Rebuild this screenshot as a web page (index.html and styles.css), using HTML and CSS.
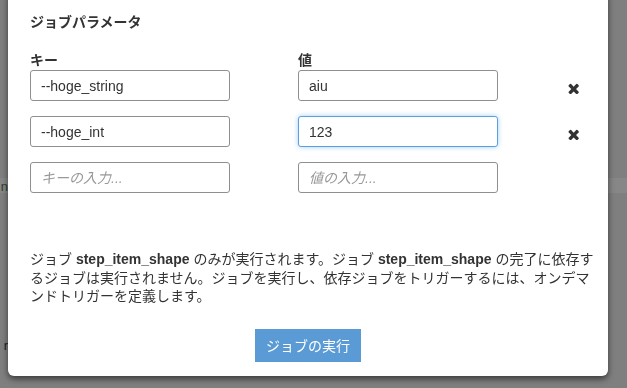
FILE: index.html
```html
<!DOCTYPE html>
<html lang="ja">
<head>
    <meta charset="UTF-8">
    <title>ジョブパラメータ</title>
    <meta name="viewport" content="width=device-width, initial-scale=1.0">
    <link rel="stylesheet" href="styles.css">
</head>
<body>
    <div class="behind">
        <div class="behind-band"></div>
        <div class="behind-line first">n</div>
        <div class="behind-line second">r</div>
    </div>

    <div class="modal">
        <div class="modal-content">
            <h4 class="modal-title">ジョブパラメータ</h4>

            <div class="params">
                <label class="param-label">キー</label>
                <label class="param-label">値</label>
                <span></span>

                <input type="text" class="param-input" value="--hoge_string">
                <input type="text" class="param-input" value="aiu">
                <span class="remove"><svg viewBox="70 266 1228 1260"><path d="M1298 1322q0 40-28 68l-136 136q-28 28-68 28t-68-28l-294-294-294 294q-28 28-68 28t-68-28l-136-136q-28-28-28-68t28-68l294-294-294-294q-28-28-28-68t28-68l136-136q28-28 68-28t68 28l294 294 294-294q28-28 68-28t68 28l136 136q28 28 28 68t-28 68l-294 294 294 294q28 28 28 68z"/></svg></span>

                <input type="text" class="param-input" value="--hoge_int">
                <input type="text" class="param-input focused" value="123">
                <span class="remove"><svg viewBox="70 266 1228 1260"><path d="M1298 1322q0 40-28 68l-136 136q-28 28-68 28t-68-28l-294-294-294 294q-28 28-68 28t-68-28l-136-136q-28-28-28-68t28-68l294-294-294-294q-28-28-28-68t28-68l136-136q28-28 68-28t68 28l294 294 294-294q28-28 68-28t68 28l136 136q28 28 28 68t-28 68l-294 294 294 294q28 28 28 68z"/></svg></span>

                <input type="text" class="param-input" placeholder="キーの入力...">
                <input type="text" class="param-input" placeholder="値の入力...">
                <span></span>
            </div>

            <p class="note">ジョブ <b>step_item_shape</b> のみが実行されます。ジョブ <b>step_item_shape</b> の完了に依存するジョブは実行されません。ジョブを実行し、依存ジョブをトリガーするには、オンデマンドトリガーを定義します。</p>

            <div class="modal-footer">
                <button type="button" class="run-button">ジョブの実行</button>
            </div>
        </div>
    </div>
</body>
</html>
```

FILE: styles.css
```css
* {
    box-sizing: border-box;
    margin: 0;
    padding: 0;
}

html, body {
    height: 100%;
    overflow: hidden;
    font-family: "Liberation Sans", Arial, "Noto Sans CJK JP", sans-serif;
    font-size: 14px;
    color: #333;
    background-color: #7f7f7f;
}

/* page under the backdrop */
.behind {
    padding-top: 178px;
}

.behind-band {
    height: 15px;
    background-color: #878787;
}

.behind-line {
    width: 8px;
    text-align: right;
    font-size: 13px;
    line-height: 16px;
    overflow: hidden;
}

.behind-line.first {
    margin-top: -14px;
    color: #2e3f2e;
}

.behind-line.second {
    margin-top: 143px;
    color: #222;
}

/* modal */
.modal {
    position: fixed;
    left: 8px;
    top: -10px;
    width: 600px;
}

.modal-content {
    background-color: #fff;
    border-radius: 6px;
    box-shadow: 0 3px 6px rgba(0, 0, 0, 0.55);
    padding: 22px 11px 14px 22px;
}

.modal-title {
    font-size: 14px;
    font-weight: bold;
    line-height: 20px;
}

.params {
    display: grid;
    grid-template-columns: 268px 268px 1fr;
    row-gap: 15px;
    margin-top: 19px;
}

.param-label {
    font-weight: bold;
    font-size: 14px;
    line-height: 18px;
    margin-bottom: -14px;
}

.param-input {
    width: 200px;
    height: 31px;
    padding: 0 10px;
    border: 1px solid #8f8f8f;
    border-radius: 3px;
    font-family: "Liberation Sans", Arial, "Noto Sans CJK JP", sans-serif;
    font-size: 14px;
    color: #333;
    outline: none;
}

.param-input::placeholder {
    color: #999;
    font-style: italic;
}

.param-input.focused {
    border-color: #5b9fe3;
    box-shadow: 0 0 5px rgba(102, 175, 233, 0.6);
}

.remove {
    padding-top: 13px;
    padding-left: 2px;
}

.remove svg {
    display: block;
    width: 11px;
    height: 11px;
    fill: #333;
}

.note {
    margin-top: 57px;
    line-height: 18.5px;
}

.modal-footer {
    display: flex;
    justify-content: center;
    margin-top: 23px;
    margin-right: 11px;
}

.run-button {
    width: 106px;
    height: 33px;
    border: none;
    border-radius: 0;
    background-color: #5a9bd5;
    color: #fff;
    font-family: "Liberation Sans", Arial, "Noto Sans CJK JP", sans-serif;
    font-size: 14px;
    cursor: pointer;
}
```
